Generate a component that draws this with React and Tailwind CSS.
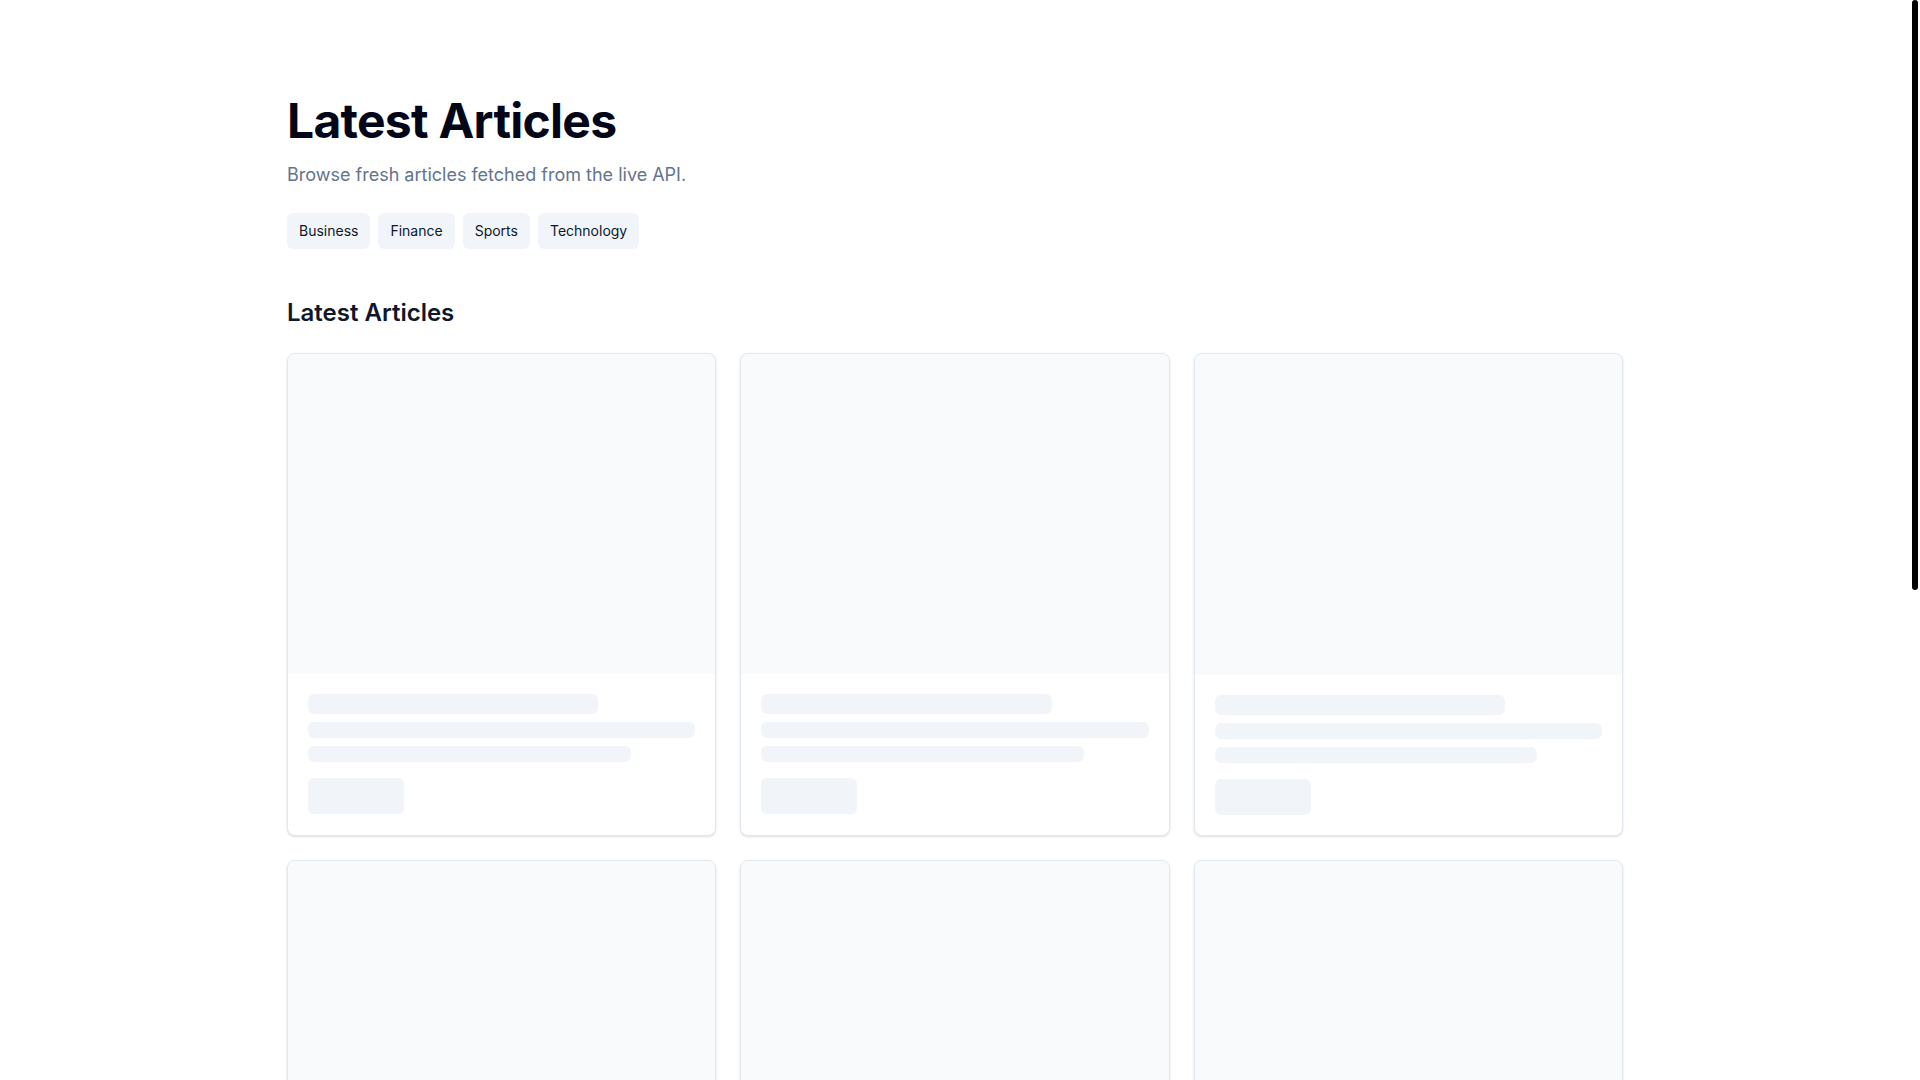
import React from 'react';

const categories = ['Business', 'Finance', 'Sports', 'Technology'];

// skeleton card shown while the articles are loading
function ArticleSkeleton() {
    return (
        <div className="rounded-lg border border-slate-200 bg-white shadow-sm overflow-hidden">
            <div className="aspect-[4/3] w-full bg-slate-50"></div>
            <div className="p-5">
                <div className="h-5 w-3/4 rounded-md bg-slate-100"></div>
                <div className="mt-2 h-4 w-full rounded-md bg-slate-100"></div>
                <div className="mt-2 h-4 w-5/6 rounded-md bg-slate-100"></div>
                <div className="mt-4 h-9 w-24 rounded-md bg-slate-100"></div>
            </div>
        </div>
    );
}

export default function App() {
    const placeholders = Array.from({ length: 9 });

    return (
        <div className="flex bg-white" style={{ fontFamily: 'Inter, "Noto Sans", sans-serif' }}>
            <main className="min-w-0 flex-1">
                <div className="mx-auto max-w-[1400px] px-8 pt-[97px] pb-32">
                    {/* Header */}
                    <h1 className="text-5xl font-bold leading-none tracking-[-0.015em] text-slate-950">Latest Articles</h1>
                    <p className="mt-4 text-lg leading-7 text-slate-500">Browse fresh articles fetched from the live API.</p>

                    {/* Category chips */}
                    <div className="mt-6 flex flex-wrap gap-2">
                        {categories.map(cat => (
                            <button
                                key={cat}
                                className="rounded-md bg-slate-100 px-3 py-2 text-sm leading-5 font-normal text-slate-900"
                            >
                                {cat}
                            </button>
                        ))}
                    </div>

                    {/* Articles */}
                    <h2 className="mt-12 mb-6 text-2xl font-semibold leading-8 text-slate-900">Latest Articles</h2>
                    <div className="grid grid-cols-3 gap-6">
                        {placeholders.map((_, index) => (
                            <ArticleSkeleton key={index} />
                        ))}
                    </div>
                </div>
            </main>

            {/* page scrollbar */}
            <aside className="sticky top-0 flex h-screen w-2.5 shrink-0 justify-center bg-white">
                <div className="h-[590px] w-1.5 rounded-full bg-black"></div>
            </aside>
        </div>
    );
}
